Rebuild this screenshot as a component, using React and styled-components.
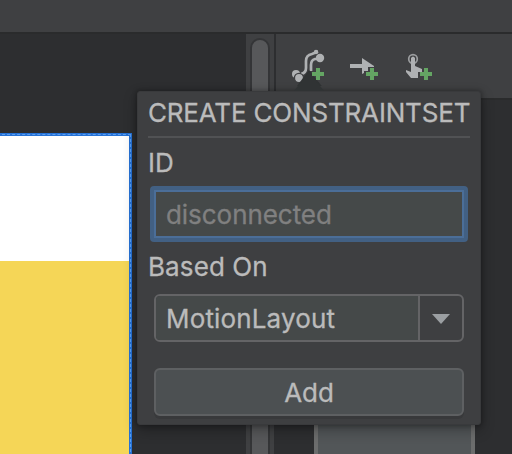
import React from "react";
import styled, { createGlobalStyle } from "styled-components";

const Global = createGlobalStyle`
  * { box-sizing: border-box; }
  body { margin: 0; background: #2d2e30; overflow: hidden; }
`;

const Window = styled.div`
  position: relative;
  width: 512px;
  height: 454px;
  overflow: hidden;
  display: grid;
  grid-template-rows: 34px 1fr;
  background: #2d2e30;
  color: #bbbbbb;
  font-family: Inter, "Liberation Sans", sans-serif;
`;

const TopBar = styled.header`
  background: #3f4042;
  border-bottom: 2px solid #2a2b2c;
`;

const Workspace = styled.div`
  display: grid;
  grid-template-columns: 246px 30px 1fr;
  min-height: 0;
`;

const Canvas = styled.main`
  background: #2d2e30;
  padding-top: 99px;
`;

const Preview = styled.div`
  width: 136px;
  height: 330px;
  margin-left: -4px;
  border: 3px solid #2672d6;
  border-width: 3px 3px 0 0;
  outline: 1px dashed #5a9ff0;
  outline-offset: -2px;
  background: linear-gradient(#fff 125px, #f5d657 125px);
`;

const ScrollTrack = styled.div`
  padding: 4px 4px 0;
  background: #3f4042;
  border-right: 2px solid #2d2e30;
`;

const ScrollThumb = styled.div`
  width: 20px;
  height: 440px;
  border: 2px solid #343537;
  border-radius: 10px;
  background: #57585a;
`;

const Side = styled.section`
  display: grid;
  grid-template-rows: 66px 1fr;
  min-height: 0;
`;

const Toolbar = styled.nav`
  display: flex;
  gap: 16px;
  padding: 12px 0 0 14px;
  background: #3f4042;
  border-bottom: 2px solid #2a2b2c;

  svg { display: block; }
`;

const Graph = styled.div`
  padding: 260px 0 0 38px;
`;

const Node = styled.div`
  width: 161px;
  height: 150px;
  border: 4px solid #6c6d6d;
  background: #525658;
`;

const Popup = styled.div`
  position: absolute;
  left: 137px;
  top: 91px;
  width: 344px;
  height: 334px;
  padding: 1px 11px 0;
  display: flex;
  flex-direction: column;
  border: 1px solid #393a3c;
  border-radius: 3px;
  background: #3e3f41;
  box-shadow: 0 0 4px 1px rgba(0, 0, 0, 0.25), 0 5px 14px rgba(0, 0, 0, 0.3);
  font-size: 26px;
  -webkit-text-stroke: 0.3px currentColor;
`;

const Pointer = styled.i`
  position: absolute;
  left: 156px;
  top: -20px;
  width: 30px;
  height: 19px;
  background: #303334;
  clip-path: polygon(50% 0, 100% 100%, 0 100%);
`;

const Title = styled.h1`
  margin: 0 -1px 10px -1px;
  height: 34px;
  padding-top: 5px;
  font-size: 26px;
  font-weight: 400;
  line-height: 30px;
  letter-spacing: -0.18px;
  white-space: nowrap;
`;

const Rule = styled.hr`
  width: 322px;
  height: 2px;
  flex: none;
  margin: -1px 0 0 -1px;
  border: 0;
  background: #515254;
`;

const Label = styled.label`
  height: ${(p) => p.$height}px;
  margin-left: -1px;
  padding-top: ${(p) => p.$top}px;
  line-height: 30px;
  letter-spacing: ${(p) => p.$spacing}px;
`;

const Input = styled.input`
  width: 318px;
  height: 56px;
  flex: none;
  margin-left: 1px;
  padding: 0 12px;
  border: 4px solid #426083;
  border-radius: 4px;
  outline: 0;
  background: #454949;
  box-shadow: inset 0 0 0 2px #4b6e98;
  color: #bbb;
  font: 26px Inter, sans-serif;
  letter-spacing: -0.05px;
  &::placeholder { color: #808080; opacity: 1; }
`;

const Select = styled.div`
  width: 310px;
  height: 48px;
  flex: none;
  margin-left: 5px;
  display: grid;
  grid-template-columns: 264px 1fr;
  border: 2px solid #646466;
  border-radius: 6px;
  overflow: hidden;
`;

const SelectValue = styled.span`
  padding-left: 10px;
  border-right: 2px solid #646466;
  background: #454949;
  line-height: 46px;
  letter-spacing: 0.15px;
`;

const Arrow = styled.i`
  width: 18px;
  height: 10px;
  margin: 18px 0 0 12px;
  background: #9b9fa2;
  clip-path: polygon(0 0, 100% 0, 50% 100%);
`;

const Button = styled.button`
  width: 310px;
  height: 48px;
  flex: none;
  margin: 26px 0 0 5px;
  padding: 1px 0 0;
  border: 2px solid #5e6062;
  border-radius: 6px;
  background: #4c5052;
  box-shadow: 0 3px 0 #38393b;
  color: #bbb;
  font: 26px/44px Inter, sans-serif;
  letter-spacing: -0.1px;
`;

const Plus = ({ x, y }) => (
  <path d={`M${x + 4} ${y}h4v4h4v4h-4v4h-4v-4h-4v-4h4z`} fill="#64a563" />
);

const ConstraintIcon = () => (
  <svg width="40" height="40" viewBox="290 46 40 40">
    <g fill="none" stroke="#afb1b3" strokeWidth="2.7">
      <path d="M301 74Q306 73 306 68V61Q306 55 312 54L318 51.500" />
      <path d="M311 71V65Q311 60 315 59H320" />
    </g>
    <g fill="#afb1b3">
      <circle cx="296" cy="74" r="4" />
      <circle cx="316" cy="52" r="2.2" />
    </g>
    <circle cx="299" cy="78" r="4.6" fill="#afb1b3" stroke="#3f4042" strokeWidth="1.400" />
    <circle cx="320" cy="58" r="4.2" fill="#afb1b3" />
    <path d="M309 70L325 90H294z" fill="#303334" />
    <Plus x={312} y={68} />
  </svg>
);

const TransitionIcon = () => (
  <svg width="40" height="40" viewBox="346 46 40 40">
    <path d="M350 64h12v-6l12 8v1h-6v4h-4v2l-2 1v-6h-12z" fill="#afb1b3" />
    <Plus x={366} y={68} />
  </svg>
);

const ClickIcon = () => (
  <svg width="40" height="40" viewBox="402 46 40 40">
    <circle cx="413" cy="59" r="4.300" fill="none" stroke="#9b9d9f" strokeWidth="1.700" />
    <path d="M411 58q2-3 4 0v8l7 3v3h-4v6h-7l-5-6v-2l5 2z" fill="#afb1b3" />
    <Plus x={420} y={68} />
  </svg>
);

export default function App() {
  return (
    <>
      <Global />
      <Window>
        <TopBar />
        <Workspace>
          <Canvas><Preview /></Canvas>
          <ScrollTrack><ScrollThumb /></ScrollTrack>
          <Side>
            <Toolbar>
              <ConstraintIcon />
              <TransitionIcon />
              <ClickIcon />
            </Toolbar>
            <Graph><Node /></Graph>
          </Side>
        </Workspace>
        <Popup>
          <Pointer />
          <Title>CREATE CONSTRAINTSET</Title>
          <Rule />
          <Label htmlFor="set-id" $height={48} $top={10} $spacing={0}>ID</Label>
          <Input id="set-id" placeholder="disconnected" />
          <Label $height={52} $top={10} $spacing={0.1}>Based On</Label>
          <Select>
            <SelectValue>MotionLayout</SelectValue>
            <Arrow />
          </Select>
          <Button>Add</Button>
        </Popup>
      </Window>
    </>
  );
}
